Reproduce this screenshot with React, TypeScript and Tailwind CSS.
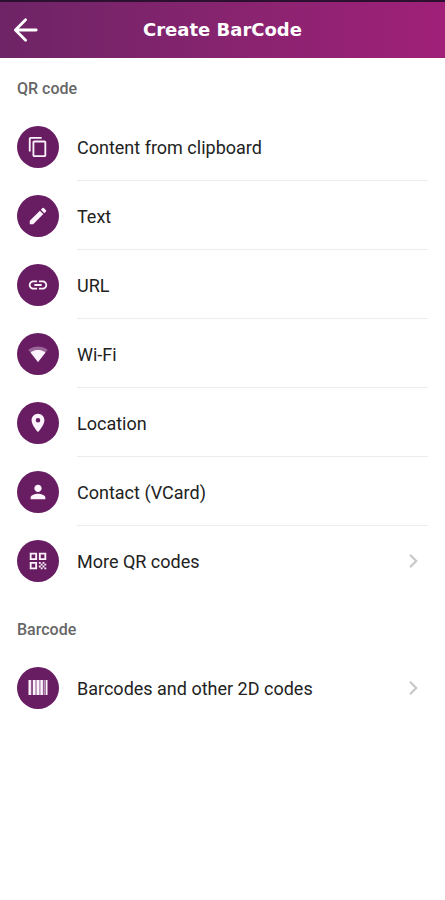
import type { ReactNode } from "react"
import {
  MdContentCopy,
  MdEdit,
  MdLink,
  MdLocationOn,
  MdPerson,
  MdQrCode,
} from "react-icons/md"

interface MenuItem {
  label: string
  icon: ReactNode
  nested?: boolean
}

const qrItems: MenuItem[] = [
  { label: "Content from clipboard", icon: <MdContentCopy /> },
  { label: "Text", icon: <MdEdit /> },
  { label: "URL", icon: <MdLink /> },
  { label: "Wi-Fi", icon: <WifiIcon /> },
  { label: "Location", icon: <MdLocationOn /> },
  { label: "Contact (VCard)", icon: <MdPerson /> },
  { label: "More QR codes", icon: <MdQrCode />, nested: true },
]

const barcodeItems: MenuItem[] = [
  { label: "Barcodes and other 2D codes", icon: <BarcodeIcon />, nested: true },
]

export default function App() {
  return (
    <div className="min-h-screen bg-white font-['Roboto',sans-serif]">
      <header className="grid h-[58px] grid-cols-[1fr_auto_1fr] items-center border-t-2 border-[#2b1030] bg-linear-to-r from-[#6e2466] to-[#a02078] px-3 text-white">
        <button
          aria-label="Back"
          className="flex size-7 items-center justify-center"
          type="button"
        >
          <BackIcon />
        </button>
        <h1 className="font-['DejaVu_Sans',sans-serif] text-lg leading-6 font-bold">
          Create BarCode
        </h1>
      </header>
      <main>
        <MenuSection title="QR code" items={qrItems} />
        <MenuSection title="Barcode" items={barcodeItems} className="mt-1" />
      </main>
    </div>
  )
}

function MenuSection({
  title,
  items,
  className = "",
}: {
  title: string
  items: MenuItem[]
  className?: string
}) {
  return (
    <section className={className}>
      <h2 className="px-[17px] pt-5 pb-3 text-base leading-[22px] font-medium text-[#666]">
        {title}
      </h2>
      <ul>
        {items.map((item) => (
          <MenuRow key={item.label} item={item} />
        ))}
      </ul>
    </section>
  )
}

function MenuRow({ item }: { item: MenuItem }) {
  return (
    <li className="group/row">
      <button
        className="flex h-[69px] w-full items-center gap-[18px] px-[17px] text-left"
        type="button"
      >
        <span className="flex size-[42px] shrink-0 items-center justify-center rounded-full bg-[#681d63] text-[22px] text-[#fdf3fc]">
          {item.icon}
        </span>
        <span className="flex h-full flex-1 items-center justify-between border-b border-[#ececec] pt-1 group-last/row:border-transparent">
          <span className="text-lg leading-6 text-[#222]">{item.label}</span>
          {item.nested && <ChevronIcon />}
        </span>
      </button>
    </li>
  )
}

function BackIcon() {
  return (
    <svg
      className="size-7"
      viewBox="0 0 28 28"
      fill="none"
      stroke="currentColor"
      strokeWidth="2.8"
      strokeLinecap="round"
      strokeLinejoin="round"
    >
      <path d="M24.2 14H3.8M13.6 3.8L3.4 14l10.2 10.2" />
    </svg>
  )
}

function ChevronIcon() {
  return (
    <svg
      className="mr-2 h-4 w-3"
      viewBox="0 0 12 16"
      fill="none"
      stroke="#c8c8c8"
      strokeWidth="2.2"
    >
      <path d="M2 0.8L8.2 7 2 13.2" />
    </svg>
  )
}

function WifiIcon() {
  return (
    <svg className="size-5" viewBox="0 0 24 24" fill="currentColor">
      <path
        fillOpacity="0.35"
        d="M12.01 21.49L23.64 7c-.45-.34-4.93-4-11.64-4C5.28 3 .81 6.66.36 7l11.63 14.49.01.01.01-.01z"
      />
      <path d="M3 10.3l8.99 11.19.01.01.01-.01L21 10.3C20.5 9.9 17.1 7.2 12 7.2S3.5 9.9 3 10.3z" />
    </svg>
  )
}

function BarcodeIcon() {
  return (
    <svg className="h-[15px] w-5" viewBox="0 0 20 15" fill="currentColor">
      <path d="M0.5 0h2.4v15H.5zM4.9 0h2.5v15H4.9zM8.6 0h3v15h-3zM12.3 0h2.6v15h-2.6zM17.6 0h1.9v15h-1.9z" />
      <path
        fillOpacity="0.6"
        d="M3.5 0h.8v15h-.8zM7.4 0h1.2v15H7.4zM15.5 0h1.4v15h-1.4z"
      />
    </svg>
  )
}
